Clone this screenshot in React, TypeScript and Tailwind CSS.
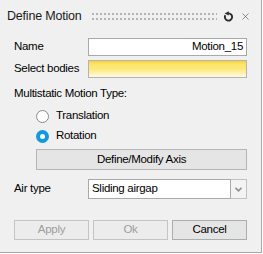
import { X } from 'lucide-react';

const font = { fontFamily: "'Liberation Sans', Arial, sans-serif" };

const txt = 'text-[11.5px] tracking-[-0.3px] whitespace-nowrap';

const Radio = ({ checked, label }: { checked: boolean; label: string }) => (
  <div className="flex items-center h-[20px] pl-[22px]">
    {checked ? (
      <span className="w-[13px] h-[13px] rounded-full bg-[#0f9ae4] flex items-center justify-center">
        <span className="w-[5px] h-[5px] rounded-full bg-white" />
      </span>
    ) : (
      <span className="w-[13px] h-[13px] rounded-full border border-[#8a8a8a] bg-white" />
    )}
    <span className={`ml-[7px] text-black ${txt}`}>{label}</span>
  </div>
);

// drag grip: two rows of dots
const Grip = () => (
  <div className="ml-[10px] flex-1 flex gap-[2px] overflow-hidden">
    {Array.from({ length: 32 }).map((_, i) => (
      <div key={i} className="flex flex-col gap-[3px]">
        <span className="block w-[2px] h-[2px] bg-[#b4b4b4]" />
        <span className="block w-[2px] h-[2px] bg-[#b4b4b4]" />
      </div>
    ))}
  </div>
);

export default function App() {
  return (
    <div
      className="w-[262px] h-[253px] bg-[#f0f0f0] border-r border-b border-[#a7a7a7] flex flex-col"
      style={font}
    >
      {/* Title bar */}
      <div className="flex items-center h-[32px] pl-[7px] pr-[10px]">
        <span className="text-[12.5px] tracking-[-0.2px] text-[#1a1a1a] whitespace-nowrap">Define Motion</span>
        <Grip />
        <svg className="ml-[6px] w-[11px] h-[11px]" viewBox="0 0 11 11">
          <path d="M5.5 2.4 A3.6 3.6 0 1 1 2.38 4.2" fill="none" stroke="#2b2b2b" strokeWidth="1.9" />
          <polygon points="1.6,2.4 5.8,0.2 5.8,4.6" fill="#2b2b2b" />
        </svg>
        <X className="ml-[6px] w-[11px] h-[11px] text-[#555]" strokeWidth={1.4} />
      </div>

      <div className="flex flex-col px-[14px] pt-[6px]">
        {/* Name */}
        <div className="flex items-center h-[18px]">
          <span className={`w-[74px] text-black ${txt}`}>Name</span>
          <div className={`flex-1 h-[18px] border border-[#a9a9a9] bg-white flex items-center justify-end pr-[3px] text-black ${txt}`}>
            Motion_15
          </div>
        </div>
        {/* Select bodies */}
        <div className="flex items-center h-[18px] mt-[4px]">
          <span className={`w-[74px] text-black ${txt}`}>Select bodies</span>
          <div className="flex-1 h-[18px] border border-[#b4b4b4] bg-[linear-gradient(to_bottom,#f8d233_0%,#fde56c_20%,#fde879_50%,#fef3bd_80%,#fffbe4_100%)]" />
        </div>

        <div className={`mt-[7px] h-[17px] flex items-center text-black ${txt}`}>Multistatic Motion Type:</div>
        <div className="mt-[4px] flex flex-col">
          <Radio checked={false} label="Translation" />
          <Radio checked label="Rotation" />
        </div>

        <div className={`ml-[22px] mt-[3px] h-[21px] border border-[#b5b5b5] bg-[#e5e5e5] flex items-center justify-center text-black ${txt}`}>
          Define/Modify Axis
        </div>

        {/* Air type */}
        <div className="flex items-center h-[20px] mt-[9px]">
          <span className={`w-[74px] text-black ${txt}`}>Air type</span>
          <div className="flex-1 h-[20px] flex">
            <div className={`flex-1 border border-[#a9a9a9] bg-white flex items-center pl-[3px] text-black ${txt}`}>
              Sliding airgap
            </div>
            <div className="w-[16px] border border-l-0 border-[#c2c2c2] bg-[#f3f3f3] flex items-center justify-center">
              <svg width="7" height="5" viewBox="0 0 7 5">
                <path d="M0.5 0.8 L3.5 3.8 L6.5 0.8" fill="none" stroke="#8f8f8f" strokeWidth="1.6" />
              </svg>
            </div>
          </div>
        </div>

        {/* Buttons */}
        <div className="flex gap-[4px] mt-[21px]">
          <div className={`w-[75px] h-[20px] border border-[#c4c4c4] bg-[#ececec] flex items-center justify-center text-[#9d9d9d] ${txt}`}>
            Apply
          </div>
          <div className={`w-[75px] h-[20px] border border-[#c4c4c4] bg-[#ececec] flex items-center justify-center text-[#9d9d9d] ${txt}`}>
            Ok
          </div>
          <div className={`flex-1 h-[20px] border border-[#adadad] bg-[#e5e5e5] flex items-center justify-center text-black ${txt}`}>
            Cancel
          </div>
        </div>
      </div>
    </div>
  );
}
